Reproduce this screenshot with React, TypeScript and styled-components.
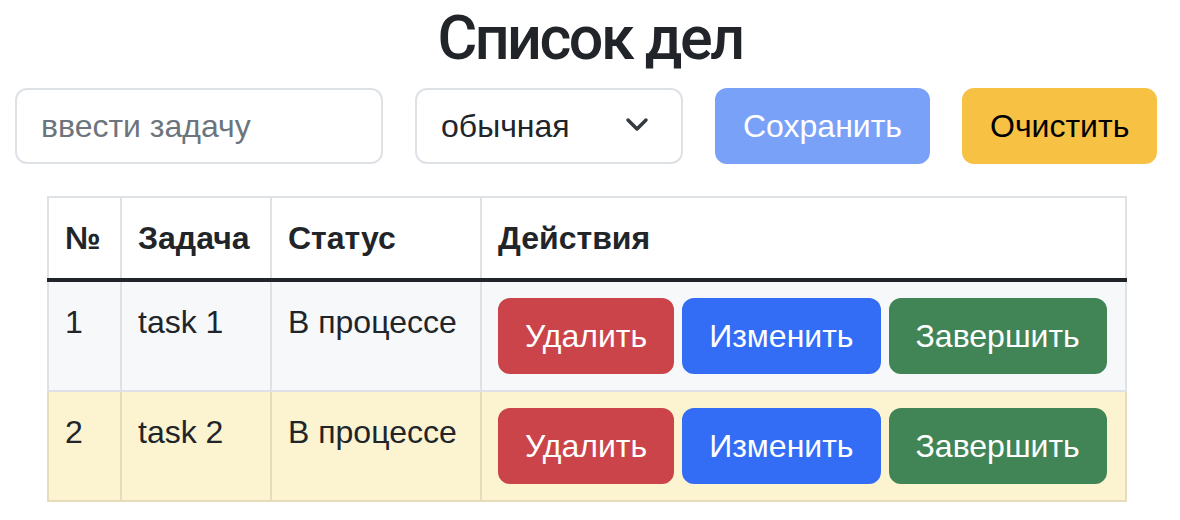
import React from "react";
import styled, { createGlobalStyle } from "styled-components";

const Global = createGlobalStyle`
  html, body { margin: 0; padding: 0; background: #fff; }
  body {
    font-family: "Liberation Sans", Arial, sans-serif;
    font-size: 32px;
    line-height: 48px;
    color: #212529;
  }
  * { box-sizing: border-box; }
`;

const Page = styled.div`
  width: 1180px;
  padding: 0 15px;
  display: flex;
  flex-direction: column;
`;

const Title = styled.h2`
  margin: 0 0 11px;
  text-align: center;
  font-family: Roboto, "Liberation Sans", sans-serif;
  font-size: 61px;
  line-height: 77px;
  font-weight: 500;
  letter-spacing: -2.5px;
  color: #212529;
`;

const Controls = styled.div`
  display: flex;
  gap: 32px;
  align-items: center;
`;

const Input = styled.input`
  width: 368px;
  height: 76px;
  padding: 12px 24px;
  border: 2px solid #dee2e6;
  border-radius: 12px;
  font: inherit;
  color: #212529;
  outline: none;
  &::placeholder { color: #6c757d; }
`;

const SelectBox = styled.div`
  position: relative;
  width: 268px;
  height: 76px;
  border: 2px solid #dee2e6;
  border-radius: 12px;
  padding: 12px 24px;
  display: flex;
  align-items: center;
  color: #212529;
`;

const Chevron = styled.svg`
  position: absolute;
  right: 32px;
  top: 27px;
`;

const Btn = styled.button<{ $bg: string; $fg?: string; $px?: number }>`
  height: 76px;
  padding: 12px ${(p) => p.$px ?? 25}px;
  border: 2px solid ${(p) => p.$bg};
  background: ${(p) => p.$bg};
  color: ${(p) => p.$fg ?? "#fff"};
  border-radius: 12px;
  font: inherit;
  line-height: 48px;
  white-space: nowrap;
  cursor: pointer;
`;

const TableWrap = styled.div`
  margin-top: 32px;
  padding: 0 32px;
`;

const Table = styled.table`
  border-collapse: collapse;
  width: 1078px;
  table-layout: fixed;
`;

const Th = styled.th<{ $w: number }>`
  width: ${(p) => p.$w}px;
  text-align: left;
  vertical-align: top;
  padding: 16px;
  font-weight: 700;
  border: 2px solid #dee2e6;
  border-bottom: 4px solid #212529;
  background: #fff;
`;

const Tr = styled.tr<{ $bg: string; $border: string }>`
  background: ${(p) => p.$bg};
  & > td { border: 2px solid ${(p) => p.$border}; }
`;

const Td = styled.td`
  vertical-align: top;
  padding: 16px;
  height: 109px;
`;

const Actions = styled.div`
  display: flex;
  gap: 8px;
`;

const rows = [
  { n: 1, task: "task 1", bg: "#f7f8fa", border: "#dee2e6" },
  { n: 2, task: "task 2", bg: "#fcf3d1", border: "#e6dcbc" },
];

export default function App() {
  return (
    <>
      <Global />
      <Page>
        <Title>Список дел</Title>
        <Controls>
          <Input placeholder="ввести задачу" />
          <SelectBox>
            обычная
            <Chevron width="24" height="16" viewBox="0 0 24 16">
              <path d="M3 3 L12 12 L21 3" fill="none" stroke="#343a40" strokeWidth="3.5" strokeLinecap="round" strokeLinejoin="round" />
            </Chevron>
          </SelectBox>
          <Btn $bg="#7aa1f8" $px={26}>Сохранить</Btn>
          <Btn $bg="#f7c244" $fg="#000" $px={26}>Очистить</Btn>
        </Controls>
        <TableWrap>
          <Table>
            <thead>
              <tr>
                <Th $w={73}>№</Th>
                <Th $w={150}>Задача</Th>
                <Th $w={210}>Статус</Th>
                <Th $w={645}>Действия</Th>
              </tr>
            </thead>
            <tbody>
              {rows.map((r) => (
                <Tr key={r.n} $bg={r.bg} $border={r.border}>
                  <Td>{r.n}</Td>
                  <Td>{r.task}</Td>
                  <Td>В процессе</Td>
                  <Td>
                    <Actions>
                      <Btn $bg="#cb444a">Удалить</Btn>
                      <Btn $bg="#346df5">Изменить</Btn>
                      <Btn $bg="#418557">Завершить</Btn>
                    </Actions>
                  </Td>
                </Tr>
              ))}
            </tbody>
          </Table>
        </TableWrap>
      </Page>
    </>
  );
}
